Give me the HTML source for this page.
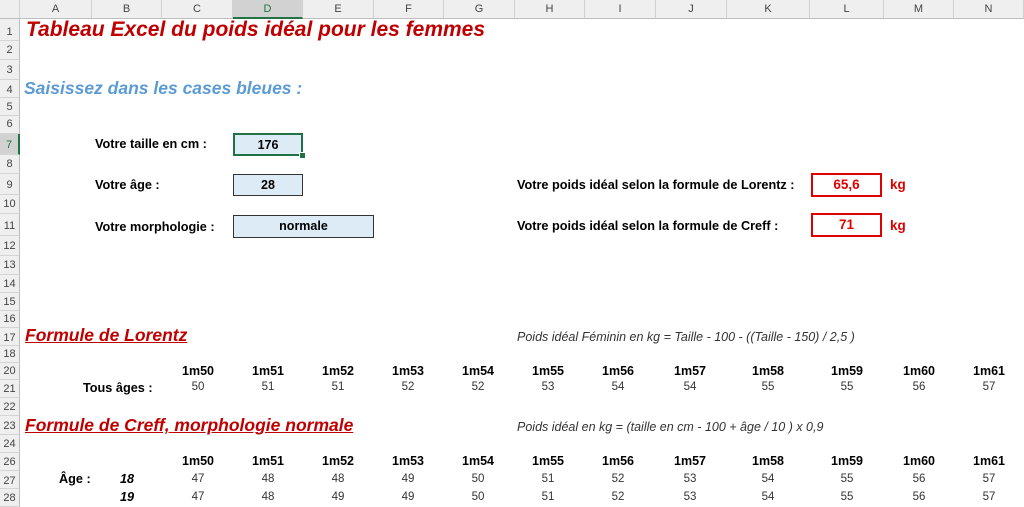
<!DOCTYPE html>
<html><head><meta charset="utf-8"><style>
body{margin:0;width:1024px;height:497px;overflow:hidden;background:#fff;font-family:"Liberation Sans",Arial,sans-serif;position:relative}
.a{position:absolute;white-space:nowrap}
.ch{position:absolute;top:0;height:19px;border-right:1px solid #d0d0d0;border-bottom:1px solid #bdbdbd;background:#efefef;font-size:11px;color:#444;text-align:center;line-height:19px;box-sizing:border-box}
.rh{position:absolute;left:0;width:20px;background:#efefef;border-bottom:1px solid #d4d4d4;border-right:1px solid #bdbdbd;box-sizing:border-box;font-size:11px;color:#444;text-align:center}
.c{position:absolute;text-align:center;font-size:12.5px;white-space:nowrap}
.b{font-weight:bold;color:#000}
.v{font-size:11.5px;color:#333}
.lbl{font-weight:bold;font-size:12.7px;color:#000}
.box{position:absolute;box-sizing:border-box;background:#ddebf7;border:1px solid #333;text-align:center;font-weight:bold;font-size:12.5px}
.rbox{position:absolute;box-sizing:border-box;border:2px solid #e00000;text-align:center;font-weight:bold;font-size:13.5px;color:#e00000}
.h{font-weight:bold;font-style:italic;font-size:17.5px;color:#c00000;text-decoration:underline}
.f{font-style:italic;font-size:12.5px;color:#333}
</style></head><body>
<div class="ch" style="left:0;width:20px"></div>
<div class="ch" style="left:20px;width:72px">A</div>
<div class="ch" style="left:92px;width:70px">B</div>
<div class="ch" style="left:162px;width:71px">C</div>
<div class="ch" style="left:233px;width:70px;background:#d2d2d2;border-bottom:2px solid #217346;color:#217346">D</div>
<div class="ch" style="left:303px;width:71px">E</div>
<div class="ch" style="left:374px;width:70px">F</div>
<div class="ch" style="left:444px;width:71px">G</div>
<div class="ch" style="left:515px;width:70px">H</div>
<div class="ch" style="left:585px;width:71px">I</div>
<div class="ch" style="left:656px;width:71px">J</div>
<div class="ch" style="left:727px;width:83px">K</div>
<div class="ch" style="left:810px;width:74px">L</div>
<div class="ch" style="left:884px;width:70px">M</div>
<div class="ch" style="left:954px;width:70px">N</div>

<div class="rh" style="top:19px;height:22px;line-height:26px">1</div>
<div class="rh" style="top:41px;height:19px;line-height:19px">2</div>
<div class="rh" style="top:60px;height:20px;line-height:20px">3</div>
<div class="rh" style="top:80px;height:18px;line-height:20px">4</div>
<div class="rh" style="top:98px;height:18px;line-height:18px">5</div>
<div class="rh" style="top:116px;height:18px;line-height:16px">6</div>
<div class="rh" style="top:134px;height:21px;line-height:22px;background:#d2d2d2;border-right:2px solid #217346;color:#217346">7</div>
<div class="rh" style="top:155px;height:19px;line-height:18px">8</div>
<div class="rh" style="top:174px;height:21px;line-height:22px">9</div>
<div class="rh" style="top:195px;height:19px;line-height:18px">10</div>
<div class="rh" style="top:214px;height:22px;line-height:24px">11</div>
<div class="rh" style="top:236px;height:20px;line-height:20px">12</div>
<div class="rh" style="top:256px;height:19px;line-height:19px">13</div>
<div class="rh" style="top:275px;height:18px;line-height:18px">14</div>
<div class="rh" style="top:293px;height:18px;line-height:18px">15</div>
<div class="rh" style="top:311px;height:17px;line-height:17px">16</div>
<div class="rh" style="top:328px;height:18px;line-height:20px">17</div>
<div class="rh" style="top:346px;height:17px;line-height:17px">18</div>
<div class="rh" style="top:363px;height:17px;line-height:17px">20</div>
<div class="rh" style="top:380px;height:18px;line-height:18px">21</div>
<div class="rh" style="top:398px;height:18px;line-height:18px">22</div>
<div class="rh" style="top:416px;height:19px;line-height:21px">23</div>
<div class="rh" style="top:435px;height:18px;line-height:18px">24</div>
<div class="rh" style="top:453px;height:18px;line-height:18px">26</div>
<div class="rh" style="top:471px;height:18px;line-height:20px">27</div>
<div class="rh" style="top:489px;height:18px;line-height:18px">28</div>

<div class="a" style="left:26px;top:18px;font-size:21px;font-weight:bold;font-style:italic;color:#c00000">Tableau Excel du poids idéal pour les femmes</div>
<div class="a" style="left:24px;top:78px;font-size:17.5px;font-weight:bold;font-style:italic;color:#5b9bd5">Saisissez dans les cases bleues :</div>

<div class="a lbl" style="left:95px;top:137px">Votre taille en cm :</div>
<div class="box" style="left:233px;top:133px;width:70px;height:23px;line-height:21px;border:2px solid #217346">176</div>
<div class="a" style="left:299px;top:152px;width:5px;height:5px;background:#217346;border:1px solid #fff"></div>
<div class="a lbl" style="left:95px;top:178px">Votre âge :</div>
<div class="box" style="left:233px;top:174px;width:70px;height:22px;line-height:20px">28</div>
<div class="a lbl" style="left:95px;top:220px">Votre morphologie :</div>
<div class="box" style="left:233px;top:215px;width:141px;height:23px;line-height:21px">normale</div>

<div class="a lbl" style="left:517px;top:178px">Votre poids idéal selon la formule de Lorentz :</div>
<div class="rbox" style="left:811px;top:173px;width:71px;height:24px;line-height:20px">65,6</div>
<div class="a" style="left:890px;top:177px;font-weight:bold;font-size:13.5px;color:#e00000">kg</div>
<div class="a lbl" style="left:517px;top:219px">Votre poids idéal selon la formule de Creff :</div>
<div class="rbox" style="left:811px;top:213px;width:71px;height:24px;line-height:20px">71</div>
<div class="a" style="left:890px;top:218px;font-weight:bold;font-size:13.5px;color:#e00000">kg</div>

<div class="a h" style="left:25px;top:325px">Formule de Lorentz</div>
<div class="a f" style="left:517px;top:330px">Poids idéal Féminin en kg = Taille - 100 - ((Taille - 150) / 2,5 )</div>
<div class="a lbl" style="left:83px;top:381px">Tous âges :</div>

<div class="a h" style="left:25px;top:415px">Formule de Creff, morphologie normale</div>
<div class="a f" style="left:517px;top:420px">Poids idéal en kg = (taille en cm - 100 + âge / 10 ) x 0,9</div>
<div class="a lbl" style="left:59px;top:472px">Âge :</div>
<div class="a lbl" style="left:120px;top:472px;font-style:italic">18</div>
<div class="a lbl" style="left:120px;top:490px;font-style:italic">19</div>

<div id="t"></div>
<script>
var cx=[198,268,338,408,478,548,618,690,768,847,919,989];
var hd=["1m50","1m51","1m52","1m53","1m54","1m55","1m56","1m57","1m58","1m59","1m60","1m61"];
var r21=[50,51,51,52,52,53,54,54,55,55,56,57];
var r27=[47,48,48,49,50,51,52,53,54,55,56,57];
var r28=[47,48,49,49,50,51,52,53,54,55,56,57];
var s="";
function row(arr,top,cls){for(var i=0;i<12;i++)s+='<div class="c '+cls+'" style="left:'+(cx[i]-30)+'px;width:60px;top:'+top+'px">'+arr[i]+'</div>';}
row(hd,364,"b");row(r21,381,"v");row(hd,454,"b");row(r27,473,"v");row(r28,491,"v");
document.getElementById("t").innerHTML=s;
</script>
</body></html>
